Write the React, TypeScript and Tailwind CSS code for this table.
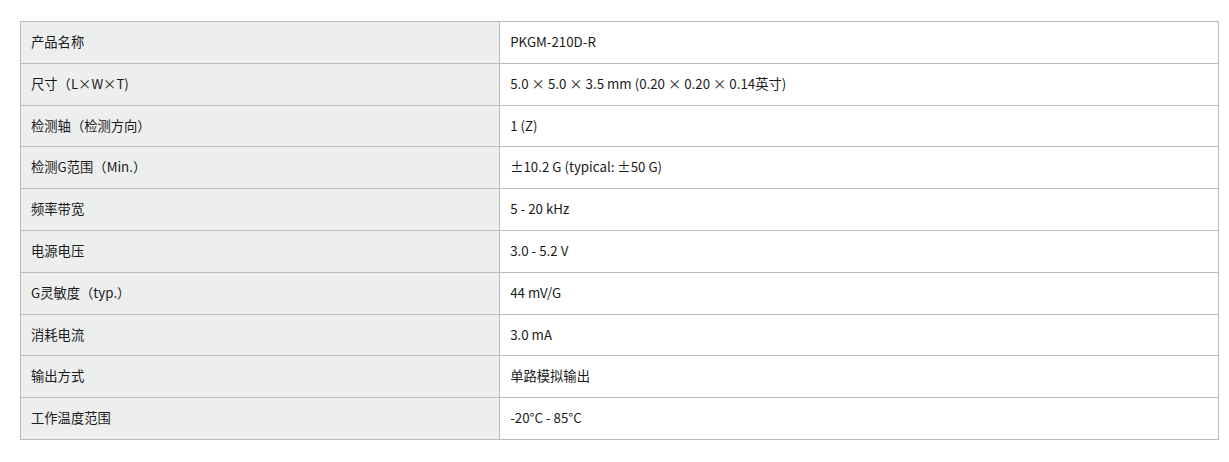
const specs = [
  { label: "产品名称", value: "PKGM-210D-R" },
  { label: "尺寸（L×W×T)", value: "5.0 × 5.0 × 3.5 mm (0.20 × 0.20 × 0.14英寸)" },
  { label: "检测轴（检测方向）", value: "1 (Z)" },
  { label: "检测G范围（Min.）", value: "±10.2 G (typical: ±50 G)" },
  { label: "频率带宽", value: "5 - 20 kHz" },
  { label: "电源电压", value: "3.0 - 5.2 V" },
  { label: "G灵敏度（typ.）", value: "44 mV/G" },
  { label: "消耗电流", value: "3.0 mA" },
  { label: "输出方式", value: "单路模拟输出" },
  { label: "工作温度范围", value: "-20°C - 85°C" },
];

export default function App() {
  return (
    <div
      className="bg-white pl-[20px] pr-[10px] pt-[21px] text-[13.3px] text-[#1a1a1a]"
      style={{ fontFamily: '"Noto Sans CJK SC", "Noto Sans", sans-serif' }}
    >
      <table className="w-full border-collapse border border-[#bbbbbb]">
        <tbody>
          {specs.map((row) => (
            <tr key={row.label}>
              {/* spec name */}
              <td className="w-[40%] border border-[#bbbbbb] bg-[#edeeee] px-[10px] py-[10px] leading-[20.8px]">
                {row.label}
              </td>
              <td className="border border-[#bbbbbb] bg-white px-[10px] py-[10px] leading-[20.8px]">
                {row.value}
              </td>
            </tr>
          ))}
        </tbody>
      </table>
    </div>
  );
}
